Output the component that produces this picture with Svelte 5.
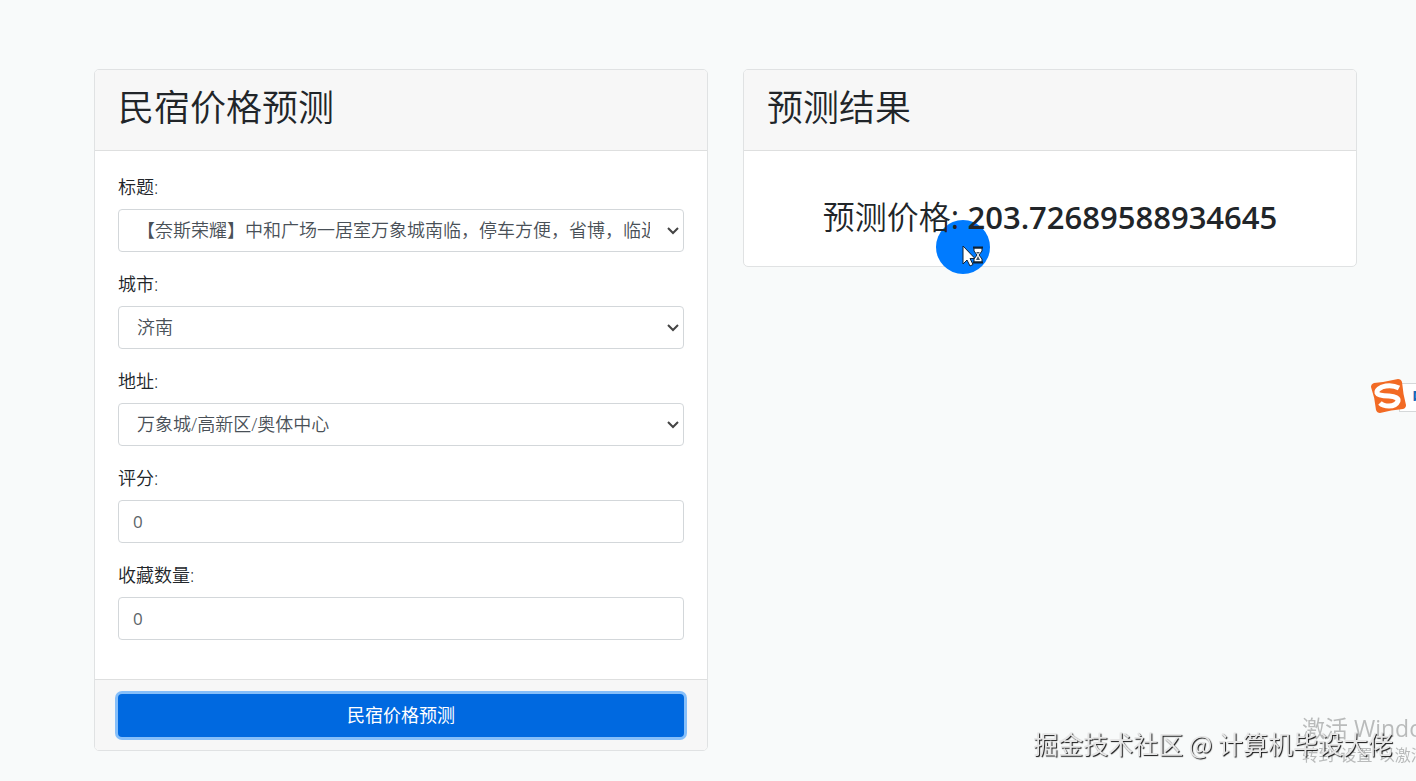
<script lang="ts">
  type Field = { id: string; label: string; options: string[] }

  const selects: Field[] = [
    {
      id: 'title',
      label: '标题:',
      options: ['【奈斯荣耀】中和广场一居室万象城南临，停车方便，省博，临近地铁'],
    },
    { id: 'city', label: '城市:', options: ['济南'] },
    { id: 'address', label: '地址:', options: ['万象城/高新区/奥体中心'] },
  ]

  let score = $state('0')
  let favorites = $state('0')
  let price = $state('203.72689588934645')
</script>

<main class="page">
  <form class="card" onsubmit={(e) => e.preventDefault()}>
    <header class="card-header"><h1>民宿价格预测</h1></header>

    <div class="card-body fields">
      {#each selects as field (field.id)}
        <div class="field">
          <label for={field.id}>{field.label}</label>
          <select id={field.id} class="control">
            {#each field.options as option}
              <option>{option}</option>
            {/each}
          </select>
        </div>
      {/each}
      <div class="field">
        <label for="score">评分:</label>
        <input id="score" class="control" type="text" bind:value={score} />
      </div>
      <div class="field">
        <label for="favorites">收藏数量:</label>
        <input id="favorites" class="control" type="text" bind:value={favorites} />
      </div>
    </div>

    <footer class="card-footer">
      <button class="submit" type="submit">民宿价格预测</button>
    </footer>
  </form>

  <section class="card">
    <header class="card-header"><h1>预测结果</h1></header>
    <div class="card-body result">
      <p>
        预测价格<span class="colon">:<span class="pointer" aria-hidden="true">
          <svg width="54" height="54" viewBox="0 0 54 54">
            <circle cx="27" cy="27" r="27" fill="#007bff" />
            <path
              d="M27 26v18l4-4 3 6 3-1.500-3-6h5z"
              fill="#fff"
              stroke="#123"
              stroke-width="1"
            />
            <path d="M38 28h8v3l-3 4 3 4v3h-8v-3l3-4-3-4z" fill="#fff" stroke="#123" stroke-width="1" />
            <path d="M37 27.500h10M37 42.500h10" stroke="#123" stroke-width="2" />
            <path d="M40 32h4l-2 2zM42 36l2 4h-4z" fill="#456" />
          </svg>
        </span></span>
        <strong>{price}</strong>
      </p>
    </div>
  </section>
</main>

<aside class="ime">
  <svg width="38" height="38" viewBox="0 0 38 38" aria-hidden="true">
    <path d="M5 5Q16 4 29 1q3 0 4 3 1 12 4 23 0 3-3 4-12 1-23 4-3 0-4-3Q6 20 2 9q0-3 3-4z" fill="#f26a24" />
    <path
      d="M30 10Q22 6 13 9q-6 3-5 6 1 3 12 3 10 1 9 5-2 5-9 5-6 0-9-3"
      fill="none"
      stroke="#fff"
      stroke-width="5"
    />
  </svg>
  <span class="ime-bar">中</span>
</aside>

<aside class="activate">
  <div class="activate-title">激活 Windows</div>
  <div>转到"设置"以激活 Windows。</div>
</aside>

<div class="watermark">掘金技术社区 @ 计算机毕设大佬</div>

<style>
  :global(body) {
    background: #f8fafa;
    color: #212529;
    font-family: 'Open Sans', 'Noto Sans CJK SC', sans-serif;
    font-size: 18px;
    line-height: 27px;
  }

  .page {
    display: grid;
    grid-template-columns: 1fr 1fr;
    align-items: start;
    gap: 35px;
    padding: 69px 59px 30px 94px;
  }

  .card {
    position: relative;
    z-index: 0;
    background: #fff;
    border: 1px solid #e0e2e3;
    border-radius: 5px;
  }

  .card-header {
    padding: 16px 23px 21px;
    background: #f7f7f7;
    border-bottom: 1px solid #dedfdf;
    border-radius: 4px 4px 0 0;
  }

  h1 {
    margin: 0;
    font-size: 36px;
    line-height: 43px;
    font-weight: 350;
  }

  .card-body {
    padding: 23px 23px 39px;
  }

  .fields {
    display: flex;
    flex-direction: column;
    gap: 19px;
  }

  .field {
    display: flex;
    flex-direction: column;
    gap: 8px;
    font-weight: 350;
  }

  .control {
    box-sizing: border-box;
    width: 100%;
    height: 43px;
    padding: 0 14px;
    color: #495057;
    background: #fff;
    border: 1px solid #d3d7da;
    border-radius: 4px;
    font: inherit;
  }

  select.control {
    appearance: none;
    padding: 0 33px 0 18px;
    background: #fff
      url("data:image/svg+xml,%3Csvg xmlns='http://www.w3.org/2000/svg' width='12' height='8'%3E%3Cpath d='M1 1l5 5 5-5' fill='none' stroke='%23444' stroke-width='2'/%3E%3C/svg%3E")
      no-repeat right 4px center;
  }

  input.control {
    color: #5d6468;
    font-size: 17px;
    font-weight: 400;
  }

  .card-footer {
    padding: 14px 23px 13px;
    background: #f7f7f7;
    border-top: 1px solid #dedfdf;
    border-radius: 0 0 4px 4px;
  }

  .submit {
    display: block;
    width: 100%;
    height: 43px;
    color: #fff;
    background: #0069e0;
    border: 0;
    border-radius: 4px;
    box-shadow: 0 0 0 3px #86bffa;
    font: inherit;
    cursor: pointer;
  }

  .result {
    padding: 43px 23px 26px;
    text-align: center;
  }

  .result p {
    margin: 0;
    font-size: 32px;
    line-height: 45px;
    font-weight: 350;
  }

  .result strong {
    font-size: 31px;
    font-weight: 600;
  }

  .colon {
    position: relative;
    font-weight: 400;
  }

  /* sits behind the digits so the price stays readable */
  .pointer {
    position: absolute;
    top: 25px;
    left: -15px;
    z-index: -1;
    line-height: 0;
  }

  .ime {
    position: fixed;
    top: 378px;
    right: 0;
    display: flex;
    align-items: center;
    width: 47px;
    overflow: hidden;
  }

  .ime svg {
    flex: none;
    z-index: 1;
  }

  .ime-bar {
    flex: none;
    margin-left: -8px;
    padding-left: 12px;
    color: #1767b8;
    background: #fff;
    border: 1px solid #d5d8d9;
    font-weight: 700;
  }

  .activate {
    position: fixed;
    right: 0;
    bottom: 14px;
    width: 114px;
    overflow: hidden;
    color: #b9bbbb;
    font-size: 16px;
    line-height: 24px;
    white-space: nowrap;
  }

  .activate-title {
    font-size: 23px;
    line-height: 30px;
  }

  .watermark {
    position: fixed;
    right: 23px;
    bottom: 20px;
    color: #e6e6e6;
    font-family: 'Noto Sans CJK SC', sans-serif;
    font-size: 25px;
    line-height: 36px;
    text-shadow: 1px 1px 1px #111;
    white-space: nowrap;
  }
</style>
